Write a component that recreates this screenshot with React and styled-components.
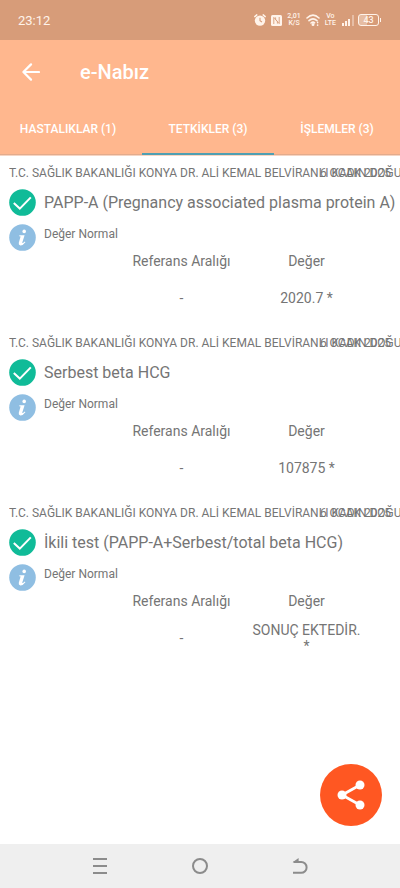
import React, { useState } from 'react'
import styled, { createGlobalStyle } from 'styled-components'

const FACILITY = 'T.C. SAĞLIK BAKANLIĞI KONYA DR. ALİ KEMAL BELVİRANLI KADIN DOĞUM VE ÇOCUK HASTANESİ';

const tabs = ['HASTALIKLAR (1)', 'TETKİKLER (3)', 'İŞLEMLER (3)'];

const results = [
    { id: 1, name: 'PAPP-A (Pregnancy associated plasma protein A)', date: '6 OCAK 2025', range: '-', value: '2020.7 *' },
    { id: 2, name: 'Serbest beta HCG', date: '6 OCAK 2025', range: '-', value: '107875 *' },
    { id: 3, name: 'İkili test (PAPP-A+Serbest/total beta HCG)', date: '6 OCAK 2025', range: '-', value: 'SONUÇ EKTEDİR. *' },
];

const StatusIcons = () => (
    <StatusRight>
        <svg width="12" height="12" viewBox="0 0 12 12">
            <circle cx="6" cy="6.6" r="5.2" fill="#fff3ea" />
            <path d="M0.8 2.6L2.8 0.9M11.2 2.6L9.2 0.9" stroke="#fff3ea" strokeWidth="1.5" strokeLinecap="round" />
            <path d="M6 3.8V6.8L8 8" fill="none" stroke="#d79c79" strokeWidth="1.1" />
        </svg>
        <svg width="11" height="11" viewBox="0 0 11 11">
            <rect width="11" height="11" rx="1.5" fill="#fff3ea" />
            <path d="M2.8 9V2.4L6.4 6.4V8.6M4.6 2.4V4.6L8.2 8.6V2" fill="none" stroke="#d79c79" strokeWidth="0.9" />
        </svg>
        <Tiny>2,01<br />K/S</Tiny>
        <svg width="14" height="12" viewBox="0 0 14 12" fill="none" stroke="#fff3ea" strokeWidth="1.6" strokeLinecap="round">
            <path d="M1 4Q7 -1.6 13 4M3 6.6Q7 3 11 6.6M5 9Q7 7.4 8.6 8.8" />
            <circle cx="7" cy="10.4" r="0.7" fill="#fff3ea" />
            <path d="M11.6 8.4V8.6M11.6 11V11.2" />
        </svg>
        <Tiny>Vo<br />LTE</Tiny>
        <svg width="14" height="12" viewBox="0 0 14 12" fill="#fff3ea">
            <rect x="1" y="9" width="2" height="3" />
            <rect x="4" y="7" width="2" height="5" />
            <rect x="7" y="5" width="2" height="7" />
            <rect x="11" y="1" width="2" height="11" opacity="0.4" />
        </svg>
        <Battery>43</Battery>
    </StatusRight>
)

const Result = ({ item }) => (
    <ResultItem>
        <TopLine>
            <Facility>{FACILITY}</Facility>
            <DateText>{item.date}</DateText>
        </TopLine>
        <IconLine>
            <svg width="27" height="27" viewBox="0 0 27 27">
                <circle cx="13.5" cy="13.5" r="13.3" fill="#10bb98" />
                <path d="M4.8 14L10.8 19.6L21.8 8.4" fill="none" stroke="#fff" strokeWidth="2" />
            </svg>
            <Name>{item.name}</Name>
        </IconLine>
        <IconLine $info>
            <svg width="27" height="27" viewBox="0 0 27 27">
                <circle cx="13.5" cy="13.5" r="13.3" fill="#8fbee2" />
                <circle cx="15.2" cy="7.4" r="1.8" fill="#fff" />
                <path d="M10.4 11.2H15.6L13.2 18.8Q13.2 19.8 15.8 17.6L16.4 18.2Q13.8 21.6 11.4 21.4Q9.2 21 9.8 18.8L11.6 12.6L10.2 12.2Z" fill="#fff" />
            </svg>
            <Note>Değer Normal</Note>
        </IconLine>
        <Values>
            <thead>
                <tr>
                    <th scope="col">Referans Aralığı</th>
                    <th scope="col">Değer</th>
                </tr>
            </thead>
            <tbody>
                <tr>
                    <td>{item.range}</td>
                    <td>{item.value}</td>
                </tr>
            </tbody>
        </Values>
    </ResultItem>
)

const App = () => {
    const [active, setActive] = useState(1);

    return (
        <Screen>
            <GlobalStyle />
            <StatusBar>
                <span>23:12</span>
                <StatusIcons />
            </StatusBar>
            <Header>
                <TitleBar>
                    <BackButton aria-label="Geri">
                        <svg width="18" height="18" viewBox="0 0 18 18" fill="none" stroke="#fff" strokeWidth="2.2" strokeLinecap="round" strokeLinejoin="round">
                            <path d="M17 9H1.4M9 1.4L1.4 9L9 16.6" />
                        </svg>
                    </BackButton>
                    <Title>e-Nabız</Title>
                </TitleBar>
                <Tabs>
                    {tabs.map((tab, i) => (
                        <Tab key={tab} $active={i === active} onClick={() => setActive(i)}>{tab}</Tab>
                    ))}
                </Tabs>
            </Header>
            <List>
                {results.map((item) => <Result key={item.id} item={item} />)}
            </List>
            <Bottom>
                <ShareButton aria-label="Paylaş">
                    <svg width="28" height="30" viewBox="0 0 28 30" fill="#fff">
                        <path d="M23 5L5 15L23 25" fill="none" stroke="#fff" strokeWidth="2.8" />
                        <circle cx="23" cy="5" r="4.5" />
                        <circle cx="5" cy="15" r="4.5" />
                        <circle cx="23" cy="25" r="4.5" />
                    </svg>
                </ShareButton>
                <NavBar>
                    <NavButton aria-label="Son uygulamalar">
                        <svg width="16" height="18" viewBox="0 0 16 18" stroke="#8c8c8c" strokeWidth="2">
                            <path d="M1 2H15M1 9H15M1 16H15" />
                        </svg>
                    </NavButton>
                    <NavButton aria-label="Ana ekran">
                        <svg width="16" height="16" viewBox="0 0 16 16" fill="none" stroke="#8c8c8c" strokeWidth="2">
                            <circle cx="8" cy="8" r="7" />
                        </svg>
                    </NavButton>
                    <NavButton aria-label="Geri">
                        <svg width="16" height="18" viewBox="0 0 16 18" fill="none" stroke="#8c8c8c" strokeWidth="2">
                            <path d="M1 15.8H9.2A5.4 5.4 0 0 0 9.2 5H1.6" />
                            <path d="M0.6 5.2L6.6 1V5.4Z" fill="#8c8c8c" stroke="none" />
                        </svg>
                    </NavButton>
                </NavBar>
            </Bottom>
        </Screen>
    )
}

const GlobalStyle = createGlobalStyle`
    body {
        margin: 0;
        background: #fff;
        font-family: Roboto, 'Noto Sans', sans-serif;
        color: #757575;
    }
    button {
        border: none;
        padding: 0;
        background: none;
        font-family: inherit;
        cursor: pointer;
    }
    svg {
        display: block;
        flex-shrink: 0;
    }
`;

const Screen = styled.div`
    min-height: 100vh;
    display: flex;
    flex-direction: column;
    overflow-x: clip;
`;
const StatusBar = styled.div`
    height: 40px;
    display: flex;
    align-items: center;
    justify-content: space-between;
    padding: 0 18px;
    background: #d79c79;
    color: #fff3ea;
    font-size: 13px;
`;
const StatusRight = styled.div`
    display: flex;
    align-items: center;
    gap: 5px;
`;
const Tiny = styled.span`
    font-size: 7px;
    line-height: 7px;
    font-weight: 500;
    text-align: center;
`;
const Battery = styled.span`
    position: relative;
    width: 21px;
    height: 12px;
    margin: 0 3px 0 -2px;
    box-sizing: border-box;
    border: 1px solid #fff3ea;
    border-radius: 3px;
    background: linear-gradient(to right, #e6bda3 43%, transparent 43%);
    font-size: 9px;
    line-height: 10px;
    font-weight: 500;
    text-align: center;
    &::after {
        content: '';
        position: absolute;
        top: 3px;
        right: -3px;
        width: 1px;
        height: 4px;
        background: #fff3ea;
    }
`;
const Header = styled.header`
    background: #ffb78e;
    color: #fff;
    overflow: hidden;
    box-shadow: inset 0 -1px #e3ab8c;
    border-bottom: 1px solid #f6d5c3;
`;
const TitleBar = styled.div`
    height: 64px;
    display: flex;
    align-items: center;
    gap: 40px;
    padding: 0 22px;
`;
const BackButton = styled.button`
    width: 18px;
    height: 32px;
    display: flex;
    align-items: center;
`;
const Title = styled.h1`
    margin: 0;
    font-size: 20px;
    line-height: 24px;
    font-weight: 500;
`;
const Tabs = styled.nav`
    display: grid;
    grid-template-columns: 148fr 132fr 126fr;
    margin-left: -6px;
`;
const Tab = styled.button`
    height: 51px;
    padding-bottom: 2px;
    color: #fff;
    font-size: 12px;
    font-weight: 500;
    box-shadow: ${props => props.$active ? 'inset 0 -2px #4f9fb2' : 'none'};
`;
const List = styled.main`
    flex: 1;
`;
const ResultItem = styled.section`
    min-height: 170px;
    box-sizing: border-box;
    padding: 9px 0 0 9px;
`;
const TopLine = styled.div`
    display: grid;
    font-size: 12px;
    line-height: 16px;
    white-space: nowrap;
`;
/* both cells share one track, a long facility name runs under the date */
const Facility = styled.span`
    grid-area: 1 / 1;
    min-width: 0;
    overflow: hidden;
`;
const DateText = styled.span`
    grid-area: 1 / 1;
    justify-self: end;
    padding-right: 9px;
`;
const IconLine = styled.div`
    display: flex;
    align-items: ${props => props.$info ? 'flex-start' : 'center'};
    gap: 8px;
    margin-top: 8px;
`;
const Name = styled.h2`
    margin: 0;
    font-size: 16px;
    line-height: 24px;
    font-weight: 400;
    white-space: nowrap;
`;
const Note = styled.span`
    font-size: 12px;
    line-height: 20px;
`;
const Values = styled.table`
    width: 250px;
    margin-left: 110px;
    table-layout: fixed;
    border-collapse: collapse;
    font-size: 14px;
    line-height: 16px;
    text-align: center;
    & th {
        padding: 0;
        font-weight: 400;
        height: 20px;
    }
    & td {
        padding: 0 8px;
        height: 54px;
    }
`;
const Bottom = styled.div`
    position: sticky;
    bottom: 0;
`;
const ShareButton = styled.button`
    position: absolute;
    right: 18px;
    bottom: 62px;
    width: 62px;
    height: 62px;
    display: flex;
    align-items: center;
    justify-content: center;
    border-radius: 50%;
    background: #ff5722;
`;
const NavBar = styled.nav`
    height: 44px;
    display: flex;
    align-items: center;
    justify-content: center;
    gap: 52px;
    background: #efefef;
`;
const NavButton = styled.button`
    width: 48px;
    height: 44px;
    display: flex;
    align-items: center;
    justify-content: center;
`;

export default App
